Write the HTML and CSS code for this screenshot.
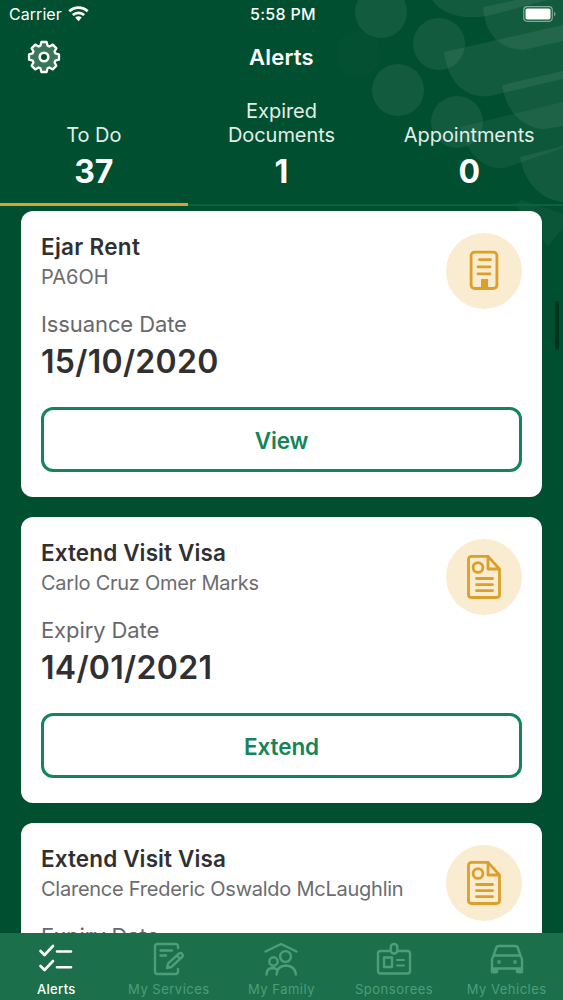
FILE: index.html
```html
<!DOCTYPE html>
<html lang="en">
<head>
<meta charset="utf-8">
<title>Alerts</title>
<link rel="stylesheet" href="styles.css">
</head>
<body>
<svg class="pattern" viewBox="0 0 225 260" width="225" height="260" fill="#fff" fill-opacity=".07">
  <circle cx="43" cy="12" r="26"/><circle cx="101" cy="44" r="26"/><circle cx="60" cy="90" r="26"/><circle cx="119" cy="122" r="26"/>
  <circle cx="20" cy="54" r="23" fill-opacity=".012"/>
  <path d="M94 0C104 14 123 20 149 16L225-4V0z"/>
  <path d="M145 7Q148 48 185 50L225 41V-10z"/>
  <path d="M106 52C110 83 128 99 152 96L225 79V25z"/>
  <path d="M164 85C169 115 188 129 207 129L225 126V71z"/>
  <path d="M122 127C129 155 147 170 166 168L225 148V102z" fill-opacity=".05"/>
  <path d="M182 157C186 182 203 200 225 202V146z"/>
  <path d="M176 204L184 200L225 214V228L210 246Z" fill-opacity=".045"/>
</svg>
<header class="header">
  <div class="status">
    <div class="carrier"><span>Carrier</span>
      <svg width="21" height="16" viewBox="0 0 21 16"><g fill="none" stroke="#fff" stroke-width="2.700"><path d="M1.300 5.300C6.500.3 14.500.3 19.700 5.300"/><path d="M4.800 9C8 6.100 13 6.100 16.200 9"/></g><path d="M7.200 11.600Q10.500 9 13.800 11.600L10.500 15.200z" fill="#fff"/></svg>
    </div>
    <div class="time">5:58 PM</div>
    <svg class="battery" width="33" height="17" viewBox="0 0 33 17"><rect x=".7" y=".7" width="28.600" height="14.600" rx="3.500" fill="none" stroke="#80aa98" stroke-width="1.200"/><rect x="2.500" y="2.600" width="25" height="10.800" rx="1.600" fill="#fff"/><path d="M31 5.500q3 2.500 0 5z" fill="#80aa98"/></svg>
  </div>
  <div class="titlebar">
    <svg class="gear" width="34" height="34" viewBox="-17 -17 34 34" stroke="#fff" stroke-width="2.300" stroke-linejoin="round"><path fill="#39765a" d="M-2.600-15L2.600-15L3.600-11.300L5.400-10.500L8.800-12.400L12.400-8.800L10.500-5.400L11.300-3.600L15-2.600V2.600L11.300 3.600L10.500 5.400L12.400 8.800L8.800 12.400L5.400 10.500L3.600 11.300L2.600 15H-2.600L-3.600 11.300L-5.400 10.500L-8.800 12.400L-12.400 8.800L-10.500 5.400L-11.300 3.600L-15 2.600V-2.600L-11.300-3.600L-10.500-5.400L-12.400-8.800L-8.800-12.400L-5.400-10.500L-3.600-11.300Z"/><circle r="4.300" fill="#004f30" stroke-width="2.600"/></svg>
    <h1>Alerts</h1>
  </div>
  <nav class="stats">
    <div class="stat active"><span class="lab">To Do</span><b>37</b></div>
    <div class="stat"><span class="lab">Expired<br>Documents</span><b>1</b></div>
    <div class="stat"><span class="lab">Appointments</span><b>0</b></div>
  </nav>
</header>
<main class="list">
  <section class="card">
    <div class="top"><div><h2 class="ejar">Ejar Rent</h2><p class="sub">PA6OH</p></div>
      <div class="badge"><svg width="30" height="42" viewBox="0 0 30 42"><g fill="none" stroke="#dc9f29" stroke-width="2.800" stroke-linecap="round"><rect x="2.100" y="2.100" width="25.800" height="36.400" rx="3.500"/><path d="M10.500 9.700H21.500M9 16.800H21M9 23.800H21"/></g><path d="M12 29h7v10h-7z" fill="#dc9f29"/></svg></div></div>
    <p class="dl">Issuance Date</p><p class="date">15/10/2020</p>
    <button>View</button>
  </section>
  <section class="card">
    <div class="top"><div><h2>Extend Visit Visa</h2><p class="sub name">Carlo Cruz Omer Marks</p></div>
      <div class="badge"><svg width="36" height="46" viewBox="0 0 36 46"><g id="doc" fill="none" stroke="#dc9f29" stroke-width="2.800" stroke-linecap="round" stroke-linejoin="round"><path d="M22 2.400H5.500q-3 0-3 3V40.500q0 3 3 3H30.500q3 0 3-3V15L22 2.400V15H33"/><circle cx="12" cy="13.500" r="4.900"/><path d="M10.500 24.500H26.500M10.500 30.600H26.500M10.500 36.700H26.500"/></g></svg></div></div>
    <p class="dl">Expiry Date</p><p class="date">14/01/2021</p>
    <button>Extend</button>
  </section>
  <section class="card">
    <div class="top"><div><h2>Extend Visit Visa</h2><p class="sub name">Clarence Frederic Oswaldo McLaughlin</p></div>
      <div class="badge"><svg width="36" height="46" viewBox="0 0 36 46"><use href="#doc"/></svg></div></div>
    <p class="dl">Expiry Date</p>
  </section>
</main>
<div class="scrollbar"></div>
<footer class="tabs">
  <div class="tab on"><svg viewBox="0 0 36 34"><path stroke-width="2.600" d="M2.500 9L6.500 13L15 4M19 9.500H33M2.500 24L6.500 28L15 19M19 25.300H33"/></svg><span>Alerts</span></div>
  <div class="tab"><svg viewBox="0 0 36 34"><path d="M27 6V4.500q0-2.500-2.500-2.500H6.500Q4 2 4 4.500V29.500Q4 32 6.500 32H24.500Q27 32 27 29.500V27M9.500 8.500H21M9.500 13.500H15M16 26L17.200 21.300L28 11.500Q30 10.500 31.200 12Q32.500 13.500 31 15.200L20.300 25zM26 13.500L29 17"/></svg><span>My Services</span></div>
  <div class="tab"><svg viewBox="0 0 36 34"><path d="M2.500 9.500L18 2L33.500 9.500M3.500 32.500Q3.500 26.500 9 26Q12 26 13.500 27.200M13.500 32.500Q14 24 23 23.500Q32 24 33 32.500"/><circle cx="10.500" cy="19.500" r="4.200"/><circle cx="22.500" cy="14.500" r="5.400"/></svg><span>My Family</span></div>
  <div class="tab"><svg viewBox="0 0 36 34"><path d="M13.500 9H4.500Q2 9 2 11.500V29Q2 31.500 4.500 31.500H31.500Q34 31.500 34 29V11.500Q34 9 31.500 9H22.500"/><rect x="14.800" y="2" width="6.500" height="9.500" rx="3"/><rect x="8" y="15.500" width="8" height="9.500"/><path stroke-width="2" d="M21 18H28M21 23.500H28"/></svg><span>Sponsorees</span></div>
  <div class="tab"><svg viewBox="0 0 36 34"><path d="M4 15L7.500 5Q8 4 10 4H26Q28 4 28.500 5L32 15Q33 16 33 18V30H28V26.500H8V30H3V18Q3 16 4 15zM6 13.500H30M3.500 26.500H32.500"/><circle cx="10" cy="20" r=".7"/><circle cx="26" cy="20" r=".7"/><path d="M4 27.500H7V30H4zM29 27.500H32V30H29z"/></svg><span>My Vehicles</span></div>
</footer>
</body>
</html>
```
FILE: styles.css
```css
* { box-sizing: border-box; margin: 0; padding: 0; }
body { width: 563px; height: 1000px; overflow: hidden; display: flex; flex-direction: column; background: #004f30; font-family: Inter, "Liberation Sans", sans-serif; color: #fff; position: relative; }
svg { display: block; }
.pattern { position: absolute; left: 338px; top: 0; }
.header { height: 206px; flex: none; display: flex; flex-direction: column; position: relative; }
.status { height: 28px; display: grid; grid-template-columns: 1fr auto 1fr; align-items: center; padding: 0 7px 0 9px; font-size: 16px; line-height: 20px; }
.carrier { display: flex; gap: 6px; align-items: center; letter-spacing: .05px; }
.carrier svg { margin-top: -1px; }
.time { font-weight: 500; letter-spacing: .3px; margin-right: -1px; }
.battery { justify-self: end; }
.titlebar { height: 57px; display: grid; grid-template-columns: 1fr auto 1fr; align-items: center; padding: 0 26.500px; }
.titlebar h1 { font-size: 22px; font-weight: 600; letter-spacing: .2px; }
.stats { flex: 1; display: grid; grid-template-columns: repeat(3, 1fr); }
.stat { display: flex; flex-direction: column; justify-content: flex-end; align-items: center; text-align: center; border-bottom: 2px solid #08643f; padding-bottom: 11px; }
.stat.active { border-bottom: 3px solid #d0a638; padding-bottom: 10px; }
.lab { font-size: 20px; line-height: 24px; letter-spacing: -.05px; color: #e1eee8; }
.stat b { font-size: 32px; line-height: 42px; font-weight: 700; padding-top: 4px; }
.list { flex: 1; min-height: 0; overflow: hidden; padding: 5px 21px 0; display: flex; flex-direction: column; gap: 20px; position: relative; }
.card { height: 286px; flex: none; background: #fefffe; border-radius: 12px; padding: 22px 20px 25px; color: #303032; display: flex; flex-direction: column; }
.top { display: flex; justify-content: space-between; height: 76px; }
h2 { font-size: 22.500px; line-height: 28px; font-weight: 600; letter-spacing: .12px; white-space: nowrap; }
.ejar { letter-spacing: .3px; }
.sub { font-size: 20px; line-height: 33px; color: #6c6c70; white-space: nowrap; }
.name { letter-spacing: -.25px; }
.badge { width: 76px; height: 76px; border-radius: 50%; background: #faecd0; display: flex; align-items: center; justify-content: center; }
.dl { font-size: 22px; line-height: 30px; letter-spacing: -.1px; color: #68686c; }
.date { font-size: 32px; line-height: 46px; font-weight: 600; letter-spacing: .3px; }
.card button { margin-top: auto; height: 65px; width: 481px; border: 3px solid #148459; border-radius: 12px; background: none; font: 600 22.500px Inter, sans-serif; letter-spacing: -.1px; padding-top: 1px; color: #148459; }
.scrollbar { position: absolute; left: 555px; top: 301px; width: 4px; height: 49px; border-radius: 2px; background: #00331d; }
.tabs { height: 67px; flex: none; display: grid; grid-template-columns: repeat(5, 1fr); background: #1b704b; position: relative; }
.tab { display: flex; flex-direction: column; align-items: center; padding-top: 9px; color: #4c9e7b; font-size: 13px; line-height: 16px; letter-spacing: .5px; gap: 5px; white-space: nowrap; }
.tab svg { width: 36px; height: 34px; fill: none; stroke: currentColor; stroke-width: 2.400; stroke-linecap: round; stroke-linejoin: round; }
.tab.on { color: #fff; font-weight: 500; letter-spacing: .35px; }
```
